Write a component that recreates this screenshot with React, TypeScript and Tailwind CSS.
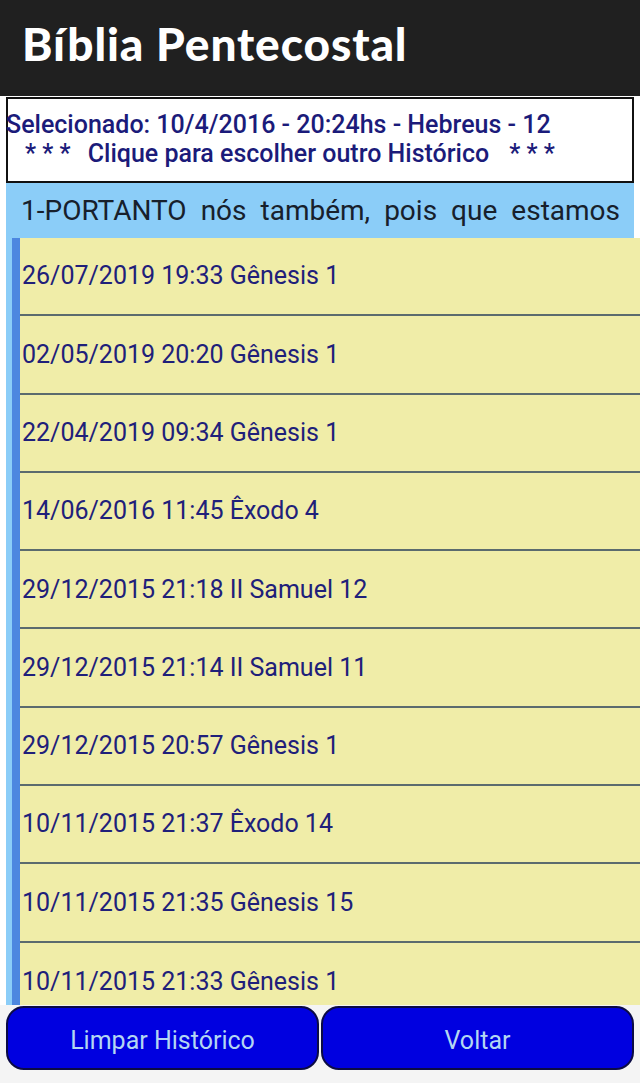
const HISTORY = [
  "26/07/2019 19:33 Gênesis 1",
  "02/05/2019 20:20 Gênesis 1",
  "22/04/2019 09:34 Gênesis 1",
  "14/06/2016 11:45 Êxodo 4",
  "29/12/2015 21:18 II Samuel 12",
  "29/12/2015 21:14 II Samuel 11",
  "29/12/2015 20:57 Gênesis 1",
  "10/11/2015 21:37 Êxodo 14",
  "10/11/2015 21:35 Gênesis 15",
  "10/11/2015 21:33 Gênesis 1",
];

export default function App() {
  return (
    <div className="flex h-[1083px] w-[640px] flex-col overflow-hidden bg-[#f4f4f4] font-['Roboto',sans-serif]">
      <header className="flex h-[96px] shrink-0 items-center bg-[#202020] px-[22px] pb-[10px]">
        <h1 className="font-['Lato',sans-serif] text-[46px] font-black tracking-[0.9px] text-white">
          Bíblia Pentecostal
        </h1>
      </header>

      <div className="flex flex-1 flex-col bg-white">
        <button className="mx-[6px] mt-[1px] flex h-[86px] shrink-0 flex-col justify-center border-2 border-[#111] bg-white pb-[2px] text-left leading-[29px] text-[#1b1b7a]">
          <span className="-ml-[2px] text-[25px] font-medium">
            Selecionado: 10/4/2016 - 20:24hs - Hebreus - 12
          </span>
          <span className="pl-[17px] text-[25px] font-medium">
            <span className="mr-[17px]">* * *</span>Clique para escolher outro Histórico
            <span className="ml-[20px]">* * *</span>
          </span>
        </button>

        <div className="mx-[6px] flex h-[55px] shrink-0 items-center bg-[#8bcdf8] pl-[15px] pr-[14px]">
          <p className="w-full text-[28px] text-[#17202c] [text-align-last:justify]">
            1-PORTANTO nós também, pois que estamos
          </p>
        </div>

        <div className="ml-[6px] flex h-[767px] shrink-0 bg-[#8bcdf8] pl-[6px]">
          <div className="w-[8px] shrink-0 bg-[#4d87e0]" />
          <ul className="flex-1 overflow-hidden bg-[#f0eda8]">
            {HISTORY.map((h, i) => (
              <li
                key={h}
                className={
                  "flex h-[78.3px] items-center px-[2px] text-[25px] text-[#20207a] " +
                  (i < HISTORY.length - 1 ? "border-b-2 border-[#5b6b6e]" : "")
                }
              >
                {h}
              </li>
            ))}
          </ul>
        </div>

        <div className="flex shrink-0 gap-[2px] bg-[#f4f4f4] px-[6px] pt-[1px]">
          <button className="h-[64px] flex-1 rounded-[18px] border-2 border-[#0b0b45] bg-[#0000e0] pt-[6px] text-[25px] text-[#b3d6f2]">
            Limpar Histórico
          </button>
          <button className="h-[64px] flex-1 rounded-[18px] border-2 border-[#0b0b45] bg-[#0000e0] pt-[6px] text-[25px] text-[#b3d6f2]">
            Voltar
          </button>
        </div>
        <div className="flex-1 bg-[#f4f4f4]" />
      </div>
    </div>
  );
}
